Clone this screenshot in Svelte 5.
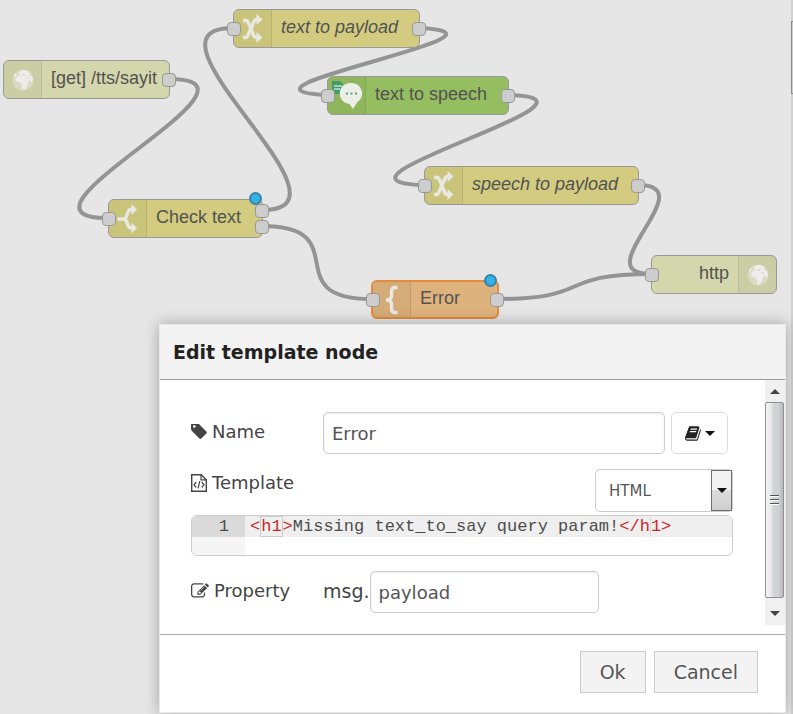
<script>
  const UNIT_W = 127;
  const UNIT_H = 38;

  const nodes = [
    { id: 'get', label: '[get] /tts/sayit', icon: 'globe', tone: 'web', x: 3, y: 60, w: 167, ins: 0, outs: 1 },
    { id: 'ttp', label: 'text to payload', icon: 'shuffle', tone: 'fn', x: 233, y: 9, w: 187, ins: 1, outs: 1, italic: true },
    { id: 'tts', label: 'text to speech', icon: 'speech', tone: 'voice', x: 327, y: 76, w: 182, ins: 1, outs: 1 },
    { id: 'check', label: 'Check text', icon: 'fork', tone: 'fn', x: 108, y: 199, w: 155, ins: 1, outs: 2, changed: true },
    { id: 'stp', label: 'speech to payload', icon: 'shuffle', tone: 'fn', x: 424, y: 166, w: 215, ins: 1, outs: 1, italic: true },
    { id: 'error', label: 'Error', icon: 'brace', tone: 'tpl', x: 371, y: 280, w: 128, ins: 1, outs: 1, changed: true, selected: true },
    { id: 'http', label: 'http', icon: 'globe', tone: 'web', x: 651, y: 255, w: 126, ins: 1, outs: 0, flip: true }
  ];

  const links = [
    ['get', 0, 'check'],
    ['check', 0, 'ttp'],
    ['check', 1, 'error'],
    ['ttp', 0, 'tts'],
    ['tts', 0, 'stp'],
    ['stp', 0, 'http'],
    ['error', 0, 'http']
  ];

  function wire([from, port, to]) {
    const a = nodes.find((n) => n.id === from);
    const b = nodes.find((n) => n.id === to);
    const x1 = a.x + a.w - 1;
    const y1 = a.y + 19 + (a.outs === 2 ? (port ? 8 : -8) : 0);
    const x2 = b.x;
    const y2 = b.y + 19;
    const dx = x2 - x1;
    const dy = y2 - y1;
    const delta = Math.hypot(dx, dy);
    let scale = delta < UNIT_W ? (0.75 * delta) / UNIT_W : 0.75;
    let lift = 0;
    if (dx < 0) {
      scale += (2 * Math.min(5 * UNIT_W, -dx)) / (5 * UNIT_W);
      if (Math.abs(dy) < 3 * UNIT_H) {
        lift = (dy > 0 ? 0.5 : -0.5) * (1 - Math.abs(dy) / (3 * UNIT_H)) * (Math.min(UNIT_W, -dx) / UNIT_W);
      }
    }
    const c = scale * UNIT_W;
    return `M${x1} ${y1}C${x1 + c} ${y1 + lift * UNIT_H} ${x2 - c} ${y2 - lift * UNIT_H} ${x2} ${y2}`;
  }

  let name = $state('Error');
  let property = $state('payload');
  let format = $state('HTML');
</script>

{#snippet glyph(icon)}
  {#if icon === 'globe'}
    <svg width="24" height="24" viewBox="0 0 24 24" aria-hidden="true">
      <circle cx="12" cy="12" r="10.5" fill="#d9d9c4" />
      <path d="M8 3.500l4-1.800 5 1 2 2.600-1.500 1.500 3 1.200 1.600 3-.6 3-1.800.6-1.400-2.600-1.600 3.200-.6 3.600-3 3-1.800-.6-.4-4-1.600-2.600-3.800-.8-1-3 2.600-3 3-.8-2.400-1.200z" fill="#ececea" />
      <path d="M3 7l2-2 .8 1.400L4 9.200zM19.500 17l1-1-.6 2.200z" fill="#ececea" />
      <path d="M11.500 6.500l2.500 1.200M16 9l1.500 2" stroke="#cfd0b4" fill="none" />
    </svg>
  {:else if icon === 'shuffle'}
    <svg width="22" height="30" viewBox="0 0 22 30" fill="none" stroke="#e9e9e3" stroke-width="3.4" aria-hidden="true">
      <path d="M1 6.500h3q1.500 0 2.300 2l5.400 13q.8 2 2.800 2h2" />
      <path d="M1 23.500h2.500q1.500 0 2.300-2l6.200-14q.8-2 2.500-2h2" />
      <path d="M14.500 0l6 5.500-6 5.500zM14.500 18l6 5.500-6 5.500z" fill="#e9e9e3" stroke="none" />
    </svg>
  {:else if icon === 'fork'}
    <svg width="22" height="30" viewBox="0 0 22 30" fill="none" stroke="#e9e9e3" stroke-width="3.4" aria-hidden="true">
      <path d="M.5 15h7.500M8 16l3.500-9q.8-1.500 2.500-1.500h2M8 14l3.500 8.500q.8 1.500 2.500 1.500h2" />
      <path d="M14.500 0l5.500 5.500-5.500 5.500zM14.500 18.500l5.500 5.500-5.500 5.500z" fill="#e9e9e3" stroke="none" />
    </svg>
  {:else if icon === 'brace'}
    <svg width="22" height="30" viewBox="0 0 22 30" fill="none" stroke="#e9e9e6" stroke-width="3.4" aria-hidden="true">
      <path d="M16.500 2.500h-2.500q-3.500 0-3.500 3.500v5q0 4-5.500 4 5.500 0 5.500 4v5q0 3.500 3.500 3.500h2.500" />
    </svg>
  {:else}
    <svg width="36" height="37" viewBox="0 0 36 37" aria-hidden="true">
      <path d="M3 4h8l3 3v10H3z" fill="#3f9c68" />
      <path d="M5 9h8M5 12h6" stroke="#c9e0cf" stroke-width="1.5" />
      <path d="M22 6a10.500 10.500 0 0 1 6 19.500L24 32l-3.500-5A10.500 10.500 0 1 1 22 6z" fill="#ecefe8" />
      <path d="M17 16.500h2M21.500 16.500h2M26 16.500h2" stroke="#5aa17b" stroke-width="2" />
    </svg>
  {/if}
{/snippet}

<main class="workspace">
  <section class="canvas" aria-label="Flow">
    <svg class="wires" aria-hidden="true">
      {#each links as link}
        <path d={wire(link)} />
      {/each}
    </svg>
    {#each nodes as n (n.id)}
      <div
        class="node {n.tone}"
        class:flip={n.flip}
        class:selected={n.selected}
        style:left="{n.x}px"
        style:top="{n.y}px"
        style:width="{n.w}px"
      >
        <span class="icon">{@render glyph(n.icon)}</span>
        <span class="label" class:italic={n.italic}>{n.label}</span>
        {#if n.ins}<i class="port in"></i>{/if}
        {#if n.outs === 1}<i class="port out"></i>{/if}
        {#if n.outs === 2}<i class="port out upper"></i><i class="port out lower"></i>{/if}
        {#if n.changed}<i class="dot"></i>{/if}
      </div>
    {/each}
    <div class="edge"><div class="edge-thumb"></div></div>
  </section>

  <div class="dialog" role="dialog" aria-labelledby="dialog-title">
    <header><h2 id="dialog-title">Edit template node</h2></header>

    <div class="body">
      <form>
        <div class="row name-row">
          <label for="name">
            <svg width="16" height="16" viewBox="128 256 1536 1450" fill="currentColor" aria-hidden="true"><path d="M576 448q0-53-37.500-90.500t-90.500-37.500-90.500 37.500-37.500 90.500 37.500 90.500 90.500 37.500 90.500-37.500 37.500-90.500zm1067 576q0 53-37 90l-491 492q-39 37-91 37-53 0-90-37l-715-716q-38-37-64.500-101t-26.500-117v-416q0-52 38-90t90-38h416q53 0 117 26.500t102 64.500l715 714q37 39 37 91z" /></svg>
            Name
          </label>
          <input id="name" type="text" bind:value={name} />
          <button class="library" type="button" aria-label="Library">
            <svg width="16" height="15" viewBox="64 128 1680 1540" fill="currentColor" aria-hidden="true"><path d="M1703 478q40 57 18 129l-275 906q-19 64-76.500 107.500t-122.500 43.500h-923q-77 0-148.500-53.500t-99.500-131.500q-24-67-2-127 0-4 3-27t4-37q1-8-3-21.500t-3-19.500q2-11 8-21t16.500-23.500 16.500-23.500q23-38 45-91.500t30-91.500q3-10 .5-30t-.5-28q3-11 17-28t17-23q21-36 42-92t25-90q1-9-2.500-32t.5-28q4-13 22-30.500t22-22.500q19-26 42.500-84.500t27.500-96.500q1-8-3-25.500t-2-26.500q2-8 9-18t18-23 17-21q8-12 16.500-30.500t15-35 16-36 19.500-32 26.500-23.500 36-11.500 47.500 5.500l-1 3q38-9 51-9h761q74 0 114 56t18 130l-274 906q-36 119-71.500 153.500t-128.500 34.500h-869q-27 0-38 15-11 16-1 43 24 70 144 70h923q29 0 56-15.500t35-41.500l300-987q7-22 5-57 38 15 59 43zm-1064 2q-4 13 2 22.500t20 9.500h608q13 0 25.500-9.500t16.500-22.500l21-64q4-13-2-22.500t-20-9.500h-608q-13 0-25.500 9.500t-16.500 22.500zm-83 256q-4 13 2 22.500t20 9.500h608q13 0 25.500-9.500t16.500-22.500l21-64q4-13-2-22.500t-20-9.500h-608q-13 0-25.500 9.500t-16.500 22.500z" /></svg>
            <span class="caret"></span>
          </button>
        </div>

        <div class="row template-row">
          <label for="format">
            <svg width="16" height="18" viewBox="0 0 16 18" fill="none" stroke="currentColor" aria-hidden="true">
              <path d="M.7.700h9.500l5.100 5v11.600H.7z" stroke-width="1.4" />
              <path d="M10 .7v5.200h5.300" stroke-width="1.2" />
              <path d="M5.300 8l-2.300 2.800 2.300 2.700M10.700 8l2.300 2.800-2.300 2.700M8.800 7.200l-1.700 7.200" stroke-width="1.2" />
            </svg>
            Template
          </label>
          <div class="picker">
            <select id="format" bind:value={format}>
              <option>HTML</option>
              <option>Markdown</option>
            </select>
            <span class="drop" aria-hidden="true"><span class="caret"></span></span>
          </div>
        </div>

        <div class="editor">
          <div class="gutter"><span>1</span></div>
          <code><span class="tag">&lt;<span class="match">h1</span>&gt;</span>Missing text_to_say query param!<span class="tag">&lt;/h<span class="margin">1</span>&gt;</span></code>
        </div>

        <div class="row">
          <label for="property">
            <svg width="18" height="16" viewBox="0 128 1792 1536" fill="currentColor" aria-hidden="true"><path d="M888 1184l116-116-152-152-116 116v56h96v96h56zm440-720q-16-16-33 1l-350 350q-17 17-1 33t33-1l350-350q17-17 1-33zm80 594v190q0 119-84.500 203.500t-203.500 84.500h-832q-119 0-203.500-84.500t-84.500-203.500v-832q0-119 84.500-203.500t203.500-84.500h832q63 0 117 25 15 7 18 23 3 17-9 29l-49 49q-14 14-32 8-23-6-45-6h-832q-66 0-113 47t-47 113v832q0 66 47 113t113 47h832q66 0 113-47t47-113v-126q0-13 9-22l64-64q15-15 35-7t20 29zm-96-738l288 288-672 672h-288v-288zm444 132l-92 92-288-288 92-92q28-28 68-28t68 28l152 152q28 28 28 68t-28 68z" /></svg>
            Property
          </label>
          <span class="prefix">msg.</span>
          <input id="property" class="short" type="text" bind:value={property} />
        </div>
      </form>

      <div class="scrollbar" aria-hidden="true">
        <span class="arrow up"></span>
        <span class="thumb"><i></i><i></i><i></i></span>
        <span class="arrow down"></span>
      </div>
    </div>

    <footer>
      <button type="button">Ok</button>
      <button type="button">Cancel</button>
    </footer>
  </div>
</main>

<style>
  :global(body) {
    background: #e6e6e6;
  }

  * {
    box-sizing: border-box;
  }

  .workspace {
    position: relative;
    min-height: 100vh;
    overflow: hidden;
    padding: 324px 7px 1px 159px;
    font-family: 'DejaVu Sans', Verdana, sans-serif;
    font-size: 18px;
    color: #444;
  }

  .canvas {
    position: absolute;
    inset: 0;
    font-family: 'Liberation Sans', Arial, sans-serif;
    font-size: 18px;
    color: #525252;
  }

  .wires {
    position: absolute;
    width: 100%;
    height: 100%;
    fill: none;
    stroke: #949494;
    stroke-width: 4;
  }

  .node {
    position: absolute;
    display: flex;
    height: 39px;
    border: 1px solid #999;
    border-radius: 6px;
  }

  .icon {
    display: flex;
    flex: none;
    align-items: center;
    justify-content: center;
    width: 38px;
    border-right: 1px solid rgb(0 0 0 / 8%);
    border-radius: 5px 0 0 5px;
    background: rgb(0 0 0 / 4%);
  }

  .label {
    padding-left: 9px;
    line-height: 35px;
    white-space: nowrap;
  }

  .italic {
    font-style: italic;
  }

  .flip {
    flex-direction: row-reverse;
  }

  .flip .icon {
    border-right: 0;
    border-left: 1px solid rgb(0 0 0 / 8%);
    border-radius: 0 5px 5px 0;
  }

  .flip .label {
    padding-right: 9px;
  }

  .web { background: #d4d6ac; }
  .fn { background: #d3cc80; }
  .voice { background: #95be60; }
  .tpl { background: #deb27c; }

  .selected {
    border: 2px solid #e28a3f;
  }

  .selected .label {
    line-height: 33px;
  }

  .port {
    position: absolute;
    top: 50%;
    width: 14px;
    height: 14px;
    margin-top: -7px;
    border: 1px solid #999;
    border-radius: 4px;
    background: #cdcdcd;
  }

  .in { left: -7px; }
  .out { right: -7px; }
  .upper { margin-top: -15px; }
  .lower { margin-top: 1px; }

  .dot {
    position: absolute;
    top: -8px;
    right: 0;
    width: 13px;
    height: 13px;
    border: 2px solid #3a83a6;
    border-radius: 50%;
    background: #32b2e6;
  }

  .edge {
    position: absolute;
    inset: 0 0 0 auto;
    width: 2px;
    padding-top: 21px;
    background: #d0d0d0;
  }

  .edge-thumb {
    height: 73px;
    border: 1px solid #8c8c8c;
    border-right: 0;
    background: #ccc;
  }

  .dialog {
    position: relative;
    border: 1px solid #e9e9e9;
    background: #fff;
    box-shadow: 0 0 14px rgb(0 0 0 / 30%);
  }

  header {
    padding: 0 13px;
    border-bottom: 1px solid #999;
    background: #f3f3f3;
  }

  h2 {
    margin: 0;
    font-size: 19px;
    line-height: 54px;
    color: #222;
  }

  .body {
    display: flex;
    margin-bottom: 9px;
  }

  form {
    flex: 1;
    min-width: 0;
    padding: 32px 32px 12px 31px;
  }

  .row {
    display: flex;
    align-items: center;
  }

  .name-row {
    padding-right: 5px;
  }

  label {
    display: flex;
    flex: none;
    align-items: center;
    gap: 5px;
    width: 132px;
    padding-bottom: 3px;
  }

  input,
  select {
    height: 42px;
    padding: 0 8px;
    border: 1px solid #ccc;
    border-radius: 5px;
    background: #fff;
    font: inherit;
    color: #555;
  }

  input {
    flex: 1;
    min-width: 0;
    box-shadow: inset 0 1px 2px rgb(0 0 0 / 8%);
  }

  .short {
    flex: 0 1 229px;
  }

  .library {
    display: flex;
    align-items: center;
    justify-content: center;
    gap: 4px;
    width: 57px;
    height: 42px;
    margin-left: 6px;
    padding: 0;
    border: 1px solid #ddd;
    border-radius: 5px;
    background: #fff;
    color: #222;
  }

  .caret {
    border: 5px solid transparent;
    border-top-color: #111;
    border-bottom-width: 0;
  }

  .template-row {
    justify-content: space-between;
    align-items: flex-start;
    margin-top: 15px;
  }

  .template-row label {
    padding: 3px 0 0;
  }

  .picker {
    display: grid;
    width: 138px;
  }

  select {
    grid-area: 1 / 1;
    height: 43px;
    padding-left: 13px;
    appearance: none;
    font-size: 15px;
  }

  .drop {
    grid-area: 1 / 1;
    justify-self: end;
    display: flex;
    align-items: center;
    justify-content: center;
    width: 21px;
    margin: 1px;
    border: 1px solid #707070;
    background: linear-gradient(#f2f2f2 50%, #dcdcdc 50%, #cfcfcf);
    pointer-events: none;
  }

  .editor {
    display: flex;
    height: 41px;
    margin: 3px 0 15px;
    overflow: hidden;
    border: 1px solid #ccc;
    border-radius: 6px;
    background: #fff;
    font-family: 'Liberation Mono', 'Courier New', monospace;
    font-size: 17px;
    line-height: 21px;
    color: #4d4d4c;
  }

  .gutter {
    flex: none;
    width: 53px;
    background: #f5f5f5;
    text-align: right;
  }

  .gutter span {
    display: block;
    padding-right: 16px;
    background: #dadada;
  }

  code {
    flex: 1;
    height: 21px;
    padding-left: 5px;
    background: #efefef;
    font: inherit;
    white-space: pre;
  }

  .tag {
    color: #c82829;
  }

  .match {
    border: 1px solid #ccc;
  }

  .margin {
    border-left: 1px solid #ddd;
  }

  .prefix {
    padding-bottom: 3px;
    font-size: 19px;
  }

  .scrollbar {
    display: flex;
    flex-direction: column;
    width: 20px;
    background: #f0f0f0;
  }

  .arrow {
    display: flex;
    align-items: center;
    justify-content: center;
    height: 22px;
  }

  .arrow::after {
    content: '';
    border: 5px solid transparent;
  }

  .up::after {
    border-top-width: 0;
    border-bottom-color: #444;
  }

  .down {
    height: 27px;
    padding-top: 4px;
  }

  .down::after {
    border-bottom-width: 0;
    border-top-color: #444;
  }

  .thumb {
    display: flex;
    flex: 1;
    flex-direction: column;
    align-items: center;
    justify-content: center;
    gap: 2px;
    margin-right: 1px;
    border: 1px solid #909094;
    border-radius: 2px;
    background: linear-gradient(90deg, #f6f6f6, #e4e4e6 35%, #d3d4d8 40%, #cfd0d4 75%, #b8b8bc);
  }

  .thumb i {
    width: 9px;
    height: 2px;
    border-top: 1px solid #555;
    background: #fff;
  }

  footer {
    display: flex;
    justify-content: flex-end;
    gap: 8px;
    padding: 16px 27px 19px;
    border-top: 1px solid #aaa;
  }

  footer button {
    height: 42px;
    padding: 0 19px;
    border: 1px solid #ccc;
    background: #f3f3f3;
    font: inherit;
    font-size: 19px;
    color: #555;
  }
</style>
